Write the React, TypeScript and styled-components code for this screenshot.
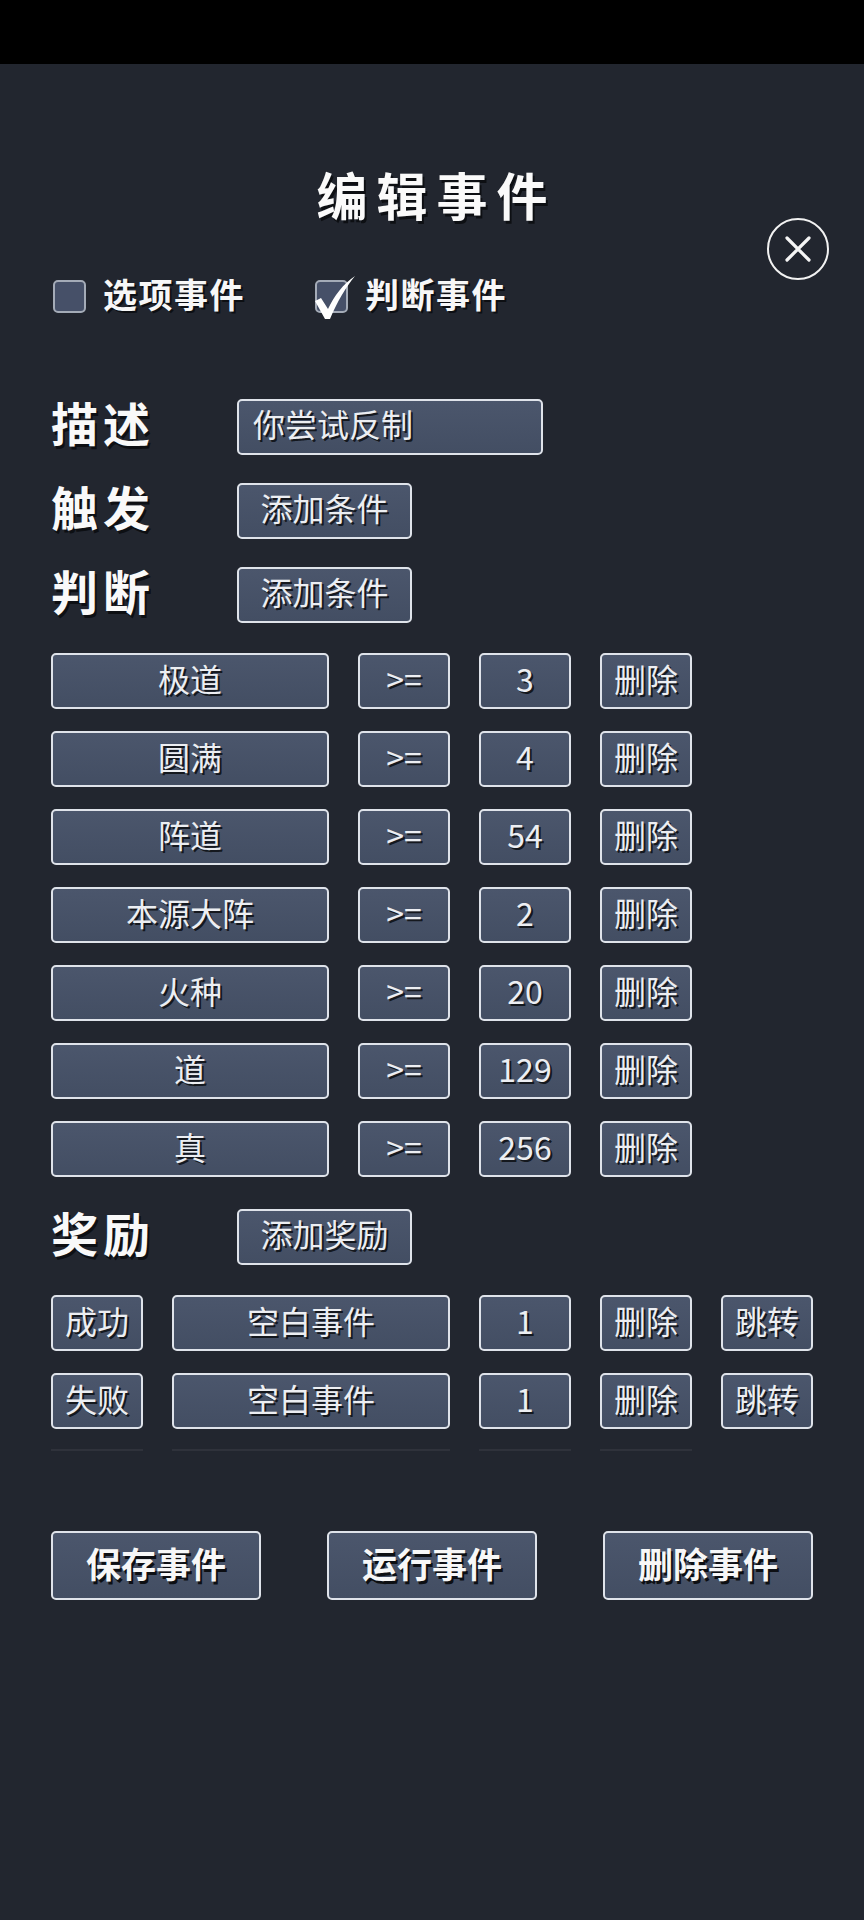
import React from "react";
import styled, { createGlobalStyle } from "styled-components";

const GlobalStyle = createGlobalStyle`
  html, body {
    margin: 0;
    padding: 0;
    background: #22262f;
  }
  body {
    font-family: "Noto Sans CJK SC", "Noto Sans", sans-serif;
  }
  * { box-sizing: border-box; }
`;

const Screen = styled.div`
  width: 864px;
  min-height: 1920px;
  background: #22262f;
  display: flex;
  flex-direction: column;
`;

const StatusBar = styled.div`
  height: 64px;
  flex-shrink: 0;
  background: #000;
`;

const Panel = styled.div`
  position: relative;
  display: flex;
  flex-direction: column;
  padding: 0 51px;
`;

const Title = styled.h1`
  margin: 100px 0 0;
  height: 60px;
  line-height: 60px;
  text-align: center;
  font-size: 51px;
  font-weight: 700;
  letter-spacing: 9px;
  padding-left: 9px;
  color: #fafafa;
  text-shadow: 2px 3px 0 #0d0f13;
`;

const CloseButton = styled.button`
  position: absolute;
  top: 154px;
  right: 35px;
  width: 62px;
  height: 62px;
  border-radius: 50%;
  border: 2.5px solid #f2f2f2;
  background: transparent;
  padding: 0;
  display: flex;
  align-items: center;
  justify-content: center;
  cursor: pointer;
`;

const CheckRow = styled.div`
  margin-top: 52px;
  height: 40px;
  padding-left: 2px;
  display: grid;
  grid-template-columns: 262px auto;
  align-items: center;
`;

const CheckGroup = styled.label`
  display: flex;
  align-items: center;
  gap: 17px;
`;

const CheckBox = styled.span`
  position: relative;
  width: 33px;
  height: 33px;
  border-radius: 5px;
  border: 2px solid #a4abb7;
  background: #465068;
  flex-shrink: 0;
`;

const CheckMark = styled.svg`
  position: absolute;
  left: -4px;
  top: -8px;
  overflow: visible;
`;

const CheckLabel = styled.span`
  font-size: 34px;
  font-weight: 700;
  letter-spacing: 1.5px;
  line-height: 1;
  padding-bottom: 4px;
  color: #f7f7f7;
  text-shadow: 2px 2px 0 #0d0f13;
`;

const FieldList = styled.div`
  margin-top: 82px;
  display: flex;
  flex-direction: column;
  gap: 28px;
`;

const FieldRow = styled.div`
  display: grid;
  grid-template-columns: 186px auto;
  align-items: center;
  height: 56px;
`;

const FieldLabel = styled.div`
  font-size: 47px;
  font-weight: 700;
  letter-spacing: 5px;
  line-height: 1;
  padding-bottom: 10px;
  color: #f9f9f9;
  text-shadow: 2px 3px 0 #0d0f13;
`;

const Button = styled.button<{ $w: number; $left?: boolean }>`
  width: ${p => p.$w}px;
  height: 56px;
  padding: 0 ${p => (p.$left ? "14px" : "0")} 7px;
  display: flex;
  align-items: center;
  justify-content: ${p => (p.$left ? "flex-start" : "center")};
  border: 2px solid #dfe3ea;
  border-radius: 5px;
  background: linear-gradient(#4b566c, #434e63);
  font-family: "Noto Sans CJK SC", "Noto Sans", sans-serif;
  font-size: 32px;
  line-height: 1;
  color: #eceef2;
  text-shadow: 2px 2px 0 rgba(14, 16, 20, 0.9);
  cursor: pointer;
`;

const ConditionList = styled.div`
  margin-top: 31px;
  display: flex;
  flex-direction: column;
  gap: 22px;
`;

const ConditionRow = styled.div`
  display: grid;
  grid-template-columns: 278px 92px 92px 92px;
  column-gap: 29px;
`;

const RewardHeader = styled(FieldRow)`
  margin-top: 31px;
`;

const RewardList = styled.div`
  margin-top: 31px;
  display: flex;
  flex-direction: column;
  gap: 22px;
`;

const RewardRow = styled.div`
  display: grid;
  grid-template-columns: 92px 278px 92px 92px 92px;
  column-gap: 29px;
`;

const FadeRow = styled(RewardRow)`
  margin-top: 20px;
  height: 3px;
`;

const FadeCell = styled.div<{ $hidden?: boolean }>`
  border-top: 2px solid ${p => (p.$hidden ? "transparent" : "rgba(255, 255, 255, 0.06)")};
`;

const ActionBar = styled.div`
  margin-top: 79px;
  display: flex;
  gap: 66px;
`;

const ActionButton = styled(Button)`
  height: 69px;
  font-size: 35px;
  font-weight: 700;
  color: #f7f7f7;
  text-shadow: 2px 3px 0 #0d0f13;
`;

const conditions = [
  { name: "极道", value: "3" },
  { name: "圆满", value: "4" },
  { name: "阵道", value: "54" },
  { name: "本源大阵", value: "2" },
  { name: "火种", value: "20" },
  { name: "道", value: "129" },
  { name: "真", value: "256" },
];

const rewards = [
  { kind: "成功", event: "空白事件", count: "1" },
  { kind: "失败", event: "空白事件", count: "1" },
];

const Check = ({ checked, label }: { checked?: boolean; label: string }) => (
  <CheckGroup>
    <CheckBox>
      {checked && (
        <CheckMark width="42" height="46" viewBox="0 0 42 46">
          <path
            d="M2 27 L8 24 L15 35 C21 22 30 10 42 2 C33 13 24 28 17 45 L12 45 Z"
            fill="#ffffff"
          />
        </CheckMark>
      )}
    </CheckBox>
    <CheckLabel>{label}</CheckLabel>
  </CheckGroup>
);

export default function App() {
  return (
    <Screen>
      <GlobalStyle />
      <StatusBar />
      <Panel>
        <Title>编辑事件</Title>
        <CloseButton aria-label="关闭">
          <svg width="28" height="28" viewBox="0 0 28 28">
            <path d="M3 3 L25 25 M25 3 L3 25" stroke="#f5f5f5" strokeWidth="3.2" strokeLinecap="round" />
          </svg>
        </CloseButton>

        <CheckRow>
          <Check label="选项事件" />
          <Check checked label="判断事件" />
        </CheckRow>

        <FieldList>
          <FieldRow>
            <FieldLabel>描述</FieldLabel>
            <Button $w={306} $left>你尝试反制</Button>
          </FieldRow>
          <FieldRow>
            <FieldLabel>触发</FieldLabel>
            <Button $w={175}>添加条件</Button>
          </FieldRow>
          <FieldRow>
            <FieldLabel>判断</FieldLabel>
            <Button $w={175}>添加条件</Button>
          </FieldRow>
        </FieldList>

        <ConditionList>
          {conditions.map((c, idx) => (
            <ConditionRow key={idx}>
              <Button $w={278}>{c.name}</Button>
              <Button $w={92}>&gt;=</Button>
              <Button $w={92}>{c.value}</Button>
              <Button $w={92}>删除</Button>
            </ConditionRow>
          ))}
        </ConditionList>

        <RewardHeader>
          <FieldLabel>奖励</FieldLabel>
          <Button $w={175}>添加奖励</Button>
        </RewardHeader>

        <RewardList>
          {rewards.map((r, idx) => (
            <RewardRow key={idx}>
              <Button $w={92}>{r.kind}</Button>
              <Button $w={278}>{r.event}</Button>
              <Button $w={92}>{r.count}</Button>
              <Button $w={92}>删除</Button>
              <Button $w={92}>跳转</Button>
            </RewardRow>
          ))}
        </RewardList>
        <FadeRow>
          <FadeCell />
          <FadeCell />
          <FadeCell />
          <FadeCell />
          <FadeCell $hidden />
        </FadeRow>

        <ActionBar>
          <ActionButton $w={210}>保存事件</ActionButton>
          <ActionButton $w={210}>运行事件</ActionButton>
          <ActionButton $w={210}>删除事件</ActionButton>
        </ActionBar>
      </Panel>
    </Screen>
  );
}
